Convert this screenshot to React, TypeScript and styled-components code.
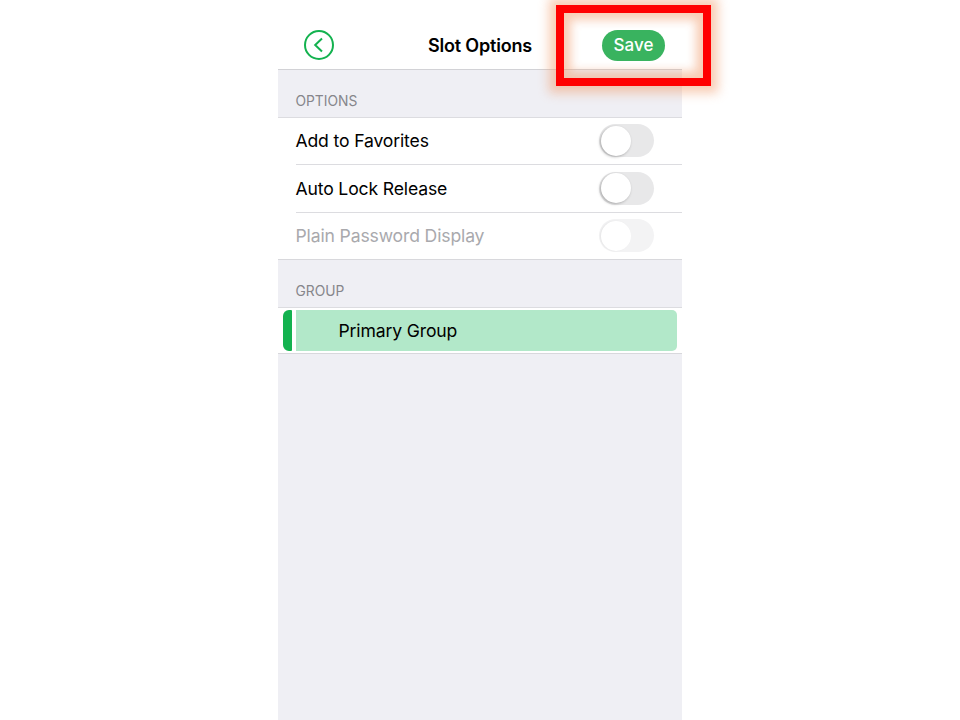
import React from "react";
import styled, { createGlobalStyle } from "styled-components";

const GlobalStyle = createGlobalStyle`
  html, body {
    margin: 0;
    padding: 0;
    height: 100%;
    background: #fff;
    font-family: Inter, "Liberation Sans", sans-serif;
  }
`;

const Page = styled.div`
  position: relative;
  width: 960px;
  height: 720px;
  overflow: hidden;
  display: flex;
  justify-content: center;
`;

const Phone = styled.div`
  width: 404px;
  height: 720px;
  background: #efeff4;
  display: flex;
  flex-direction: column;
`;

const NavBar = styled.header`
  height: 70px;
  flex: none;
  box-sizing: border-box;
  padding: 21px 17px 0 26px;
  background: #fff;
  border-bottom: 1.5px solid #d2d2d6;
  display: flex;
  align-items: center;
  justify-content: space-between;
  position: relative;
`;

const BackButton = styled.button`
  width: 30px;
  height: 30px;
  padding: 0;
  border: 0;
  background: none;
  display: block;
`;

const Title = styled.h1`
  position: absolute;
  left: 0;
  right: 0;
  top: 35px;
  margin: 0;
  text-align: center;
  font-size: 18px;
  line-height: 22px;
  font-weight: 600;
  letter-spacing: -0.2px;
  color: #000;
`;

const SaveButton = styled.button`
  width: 63px;
  height: 31px;
  padding: 0;
  border: 0;
  border-radius: 16px;
  background: #39b35f;
  color: #fff;
  font-family: inherit;
  font-size: 17px;
  font-weight: 500;
`;

const SectionLabel = styled.div`
  height: 47px;
  flex: none;
  box-sizing: border-box;
  padding: 23px 17.5px 0;
  font-size: 13.8px;
  line-height: 17px;
  color: #86868b;
`;

const List = styled.div`
  flex: none;
  background: #fff;
  border-top: 1px solid #dcdce0;
  border-bottom: 1px solid #d8d8dc;
`;

const Row = styled.div`
  height: 46px;
  box-sizing: border-box;
  margin-left: 17.5px;
  padding-right: 28px;
  padding-bottom: 1px;
  display: flex;
  align-items: center;
  justify-content: space-between;
  & + & {
    border-top: 1px solid #dcdce0;
    height: 47.5px;
    padding-bottom: 0;
  }
`;

const RowLabel = styled.span<{ $disabled?: boolean }>`
  font-size: 17.6px;
  letter-spacing: -0.15px;
  color: ${(p) => (p.$disabled ? "#a9a9ad" : "#000")};
`;

const Toggle = styled.span<{ $disabled?: boolean }>`
  position: relative;
  display: block;
  width: 55px;
  height: 33px;
  border-radius: 17px;
  background: ${(p) => (p.$disabled ? "#f3f3f4" : "#e8e8e9")};

  &::after {
    content: "";
    position: absolute;
    left: 1.5px;
    top: 1.5px;
    width: 30px;
    height: 30px;
    border-radius: 50%;
    background: #fff;
    box-shadow: ${(p) =>
      p.$disabled
        ? "-1px 0 2px rgba(0, 0, 0, 0.06)"
        : "-1px 1px 3px rgba(0, 0, 0, 0.28)"};
  }
`;

const GroupList = styled.div`
  flex: none;
  height: 47px;
  box-sizing: border-box;
  background: #fff;
  border-top: 1px solid #dcdce0;
  border-bottom: 1px solid #d8d8dc;
  padding: 2px 5px;
  display: flex;
  gap: 4px;
`;

const GroupTab = styled.span`
  width: 9px;
  flex: none;
  background: #13b24f;
  border-radius: 6px 1px 1px 6px;
`;

const GroupCell = styled.div`
  flex: 1;
  box-sizing: border-box;
  padding-left: 42.5px;
  display: flex;
  align-items: center;
  background: #b2e8c9;
  border-radius: 0 5px 5px 0;
  font-size: 17.6px;
  letter-spacing: -0.15px;
  color: #000;
`;

const Callout = styled.div`
  position: absolute;
  left: 556px;
  top: 5px;
  width: 155px;
  height: 81px;
  box-sizing: border-box;
  border: 8px solid #ff0000;
  box-shadow:
    0 0 10px 7px rgba(240, 150, 100, 0.48),
    inset 0 0 10px 7px rgba(240, 150, 100, 0.48);
  pointer-events: none;
`;

const options = [
  { label: "Add to Favorites" },
  { label: "Auto Lock Release" },
  { label: "Plain Password Display", disabled: true },
];

export default function App() {
  return (
    <>
      <GlobalStyle />
      <Page>
        <Phone>
          <NavBar>
            <BackButton aria-label="Back">
              <svg width="30" height="30" viewBox="0 0 30 30" fill="none" stroke="#13b24f">
                <circle cx="15" cy="15" r="14" strokeWidth="2" />
                <path d="M18 8.5 L11.2 15 L18 21.5" strokeWidth="2" />
              </svg>
            </BackButton>
            <Title>Slot Options</Title>
            <SaveButton>Save</SaveButton>
          </NavBar>
          <SectionLabel>OPTIONS</SectionLabel>
          <List>
            {options.map((o) => (
              <Row key={o.label}>
                <RowLabel $disabled={o.disabled}>{o.label}</RowLabel>
                <Toggle $disabled={o.disabled} />
              </Row>
            ))}
          </List>
          <SectionLabel>GROUP</SectionLabel>
          <GroupList>
            <GroupTab />
            <GroupCell>Primary Group</GroupCell>
          </GroupList>
        </Phone>
        <Callout />
      </Page>
    </>
  );
}
